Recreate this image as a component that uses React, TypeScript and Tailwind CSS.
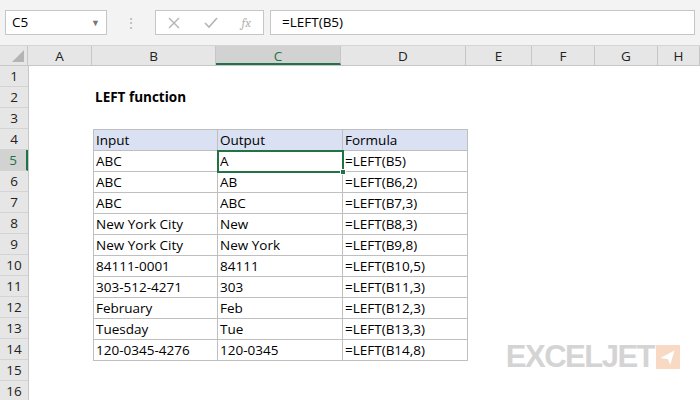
const cols = [
  { n: "A", w: 64 },
  { n: "B", w: 124 },
  { n: "C", w: 125 },
  { n: "D", w: 125 },
  { n: "E", w: 66 },
  { n: "F", w: 63 },
  { n: "G", w: 63 },
  { n: "H", w: 42 },
];

const data = [
  ["ABC", "A", "=LEFT(B5)"],
  ["ABC", "AB", "=LEFT(B6,2)"],
  ["ABC", "ABC", "=LEFT(B7,3)"],
  ["New York City", "New", "=LEFT(B8,3)"],
  ["New York City", "New York", "=LEFT(B9,8)"],
  ["84111-0001", "84111", "=LEFT(B10,5)"],
  ["303-512-4271", "303", "=LEFT(B11,3)"],
  ["February", "Feb", "=LEFT(B12,3)"],
  ["Tuesday", "Tue", "=LEFT(B13,3)"],
  ["120-0345-4276", "120-0345", "=LEFT(B14,8)"],
];

function Cell({ children, className = "" }: { children?: React.ReactNode; className?: string }) {
  return <div className={`h-[21px] px-[2px] leading-[21px] whitespace-nowrap overflow-visible ${className}`}>{children}</div>;
}

export default function App() {
  const rows = Array.from({ length: 16 }, (_, i) => i + 1);
  return (
    <div className="w-[700px] h-[400px] overflow-hidden bg-white text-[13.5px] text-black" style={{ fontFamily: '"Open Sans", "Liberation Sans", sans-serif' }}>
      {/* formula bar */}
      <div className="h-[46px] bg-[#f3f3f3] flex items-center px-[5px] gap-[6px] border-b border-[#d4d4d4]">
        <div className="w-[102px] h-[25px] bg-white border border-[#c6c6c6] flex items-center justify-between px-[6px]">
          <span>C5</span>
          <span className="text-[#777] text-[9px]">▼</span>
        </div>
        <span className="text-[#aaa] text-[12px] mx-[12px] leading-none">⋮</span>
        <div className="w-[109px] h-[25px] bg-white border border-[#c6c6c6] flex items-center justify-around text-[#b4b4b4]">
          <svg width="12" height="12" viewBox="0 0 12 12"><path d="M1 1L11 11M11 1L1 11" stroke="#b4b4b4" strokeWidth="1.4" /></svg>
          <svg width="14" height="12" viewBox="0 0 14 12"><path d="M1 6L5 10L13 1" stroke="#b4b4b4" strokeWidth="1.6" fill="none" /></svg>
          <span className="italic font-serif text-[13px]">fx</span>
        </div>
        <div className="flex-1 h-[25px] bg-white border border-[#c6c6c6] flex items-center px-[11px]">=LEFT(B5)</div>
      </div>
      {/* headers */}
      <div className="flex h-[20px] bg-[#e6e6e6] border-b border-[#c6c6c6] text-[#222]">
        <div className="w-[29px] border-r border-[#c6c6c6] relative">
          <div className="absolute right-[3px] bottom-[3px] w-0 h-0 border-l-[12px] border-l-transparent border-b-[12px] border-b-[#b4b4b4]" />
        </div>
        {cols.map((c) => (
          <div
            key={c.n}
            style={{ width: c.w }}
            className={`shrink-0 text-center leading-[20px] border-r border-[#c6c6c6] ${c.n === "C" ? "bg-[#d2d2d2] text-[#217346] border-b-2 border-b-[#217346]" : ""}`}
          >
            {c.n}
          </div>
        ))}
      </div>
      <div className="flex">
        <div className="w-[29px] shrink-0 bg-[#e6e6e6] border-r border-[#c6c6c6]">
          {rows.map((r) => (
            <div key={r} className={`h-[21px] leading-[21px] text-center border-b border-[#d4d4d4] ${r === 5 ? "bg-[#d2d2d2] text-[#217346] border-r-2 border-r-[#217346]" : "text-[#222]"}`}>
              {r}
            </div>
          ))}
        </div>
        <div className="w-[64px] shrink-0" />
        <div className="flex flex-col">
          <div className="h-[21px]" />
          <div className="h-[21px] leading-[21px] px-[2px] font-bold">LEFT function</div>
          <div className="h-[21px]" />
          <div className="grid grid-cols-[124px_125px_125px] border-l border-t border-[#bfbfbf]">
            {["Input", "Output", "Formula"].map((h) => (
              <Cell key={h} className="bg-[#d9e1f2] border-r border-b border-[#bfbfbf]">{h}</Cell>
            ))}
            {data.map((row, i) =>
              row.map((v, j) => (
                <Cell
                  key={`${i}-${j}`}
                  className={`border-r border-b border-[#bfbfbf] ${i === 0 && j === 1 ? "relative outline-2 outline-[#217346] -outline-offset-1" : ""}`}
                >
                  {v}
                  {i === 0 && j === 1 && <span className="absolute -right-[4px] -bottom-[4px] w-[6px] h-[6px] bg-[#217346] border border-white" />}
                </Cell>
              ))
            )}
          </div>
        </div>
        <div className="flex-1 flex items-end justify-end pb-[30px] pr-[20px]">
          <div className="flex items-center gap-[2px]">
            <span className="text-[31px] font-black tracking-[-1.5px] text-[#d4d4d4] leading-none" style={{ fontFamily: '"Liberation Sans", sans-serif' }}>EXCELJET</span>
            <svg width="24" height="24" viewBox="0 0 22 22">
              <rect width="22" height="22" fill="#f8d9c4" />
              <path d="M4 12L17 5L13 18L11 13Z" fill="white" />
            </svg>
          </div>
        </div>
      </div>
    </div>
  );
}
